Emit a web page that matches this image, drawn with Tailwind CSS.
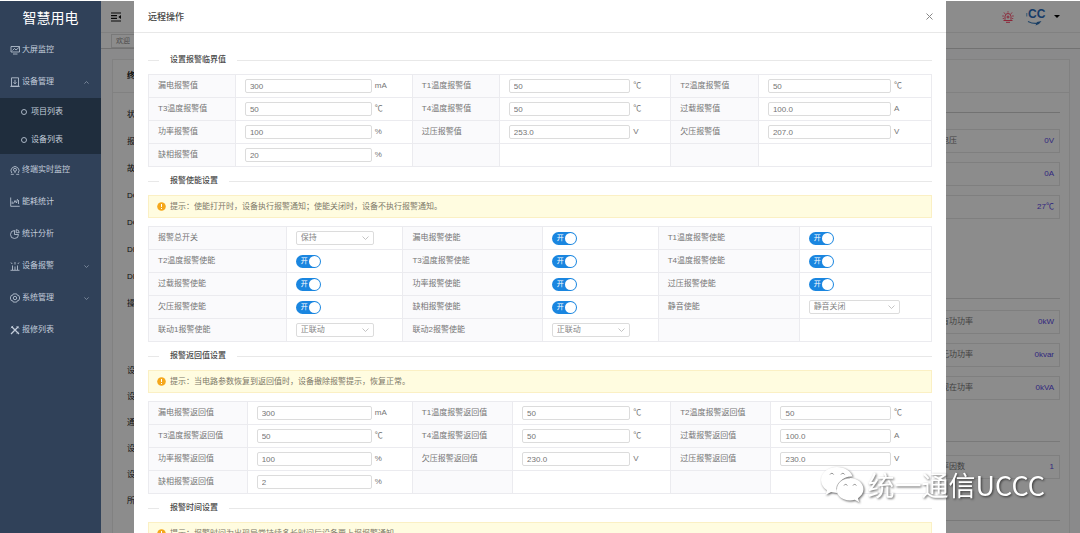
<!DOCTYPE html>
<html lang="zh-CN">
<head>
<meta charset="utf-8">
<title>智慧用电</title>
<script src="https://cdn.jsdelivr.net/npm/@tailwindcss/browser@4"></script>
</head>
<body class="flex h-screen overflow-hidden bg-white pt-px font-['Liberation_Sans','Noto_Sans_CJK_SC',sans-serif] text-[8px] leading-3 text-[#757575]">

<aside class="flex w-[101px] shrink-0 flex-col bg-[#304159] text-[#c3cddb]">
  <h1 class="flex h-[33px] items-center justify-center text-[14px] leading-5 text-white">智慧用电</h1>
  <nav id="menu" class="flex flex-col"></nav>
</aside>

<main class="relative flex min-w-0 flex-1 flex-col bg-white">
  <header class="flex h-8 shrink-0 items-center justify-between border-b border-[#ececec] pr-5 pl-[10px]">
    <button aria-label="收起菜单"><svg class="size-[10px]" viewBox="0 0 10 10" fill="none" stroke="#111" stroke-width="1.2"><path d="M0 1h10M0 3.7h6M0 6.3h6M0 9h10"/><path d="M10 3v4L7.3 5z" fill="#111" stroke="none"/></svg></button>
    <div class="flex items-center">
      <button aria-label="报警"><svg class="size-3" viewBox="0 0 12 12" fill="none" stroke="#ff3358" stroke-width=".9"><path d="M3 8.800V5.500a3 3 0 0 1 6 0v3.300M1.500 9.500h9M6 4.500v3M4.500 6h3M6 .3v1.200M2 1.500l1 1.300M10 1.500L9 2.800M.3 5h1.500M10.200 5h1.500M.8 7.500h1M10.200 7.500h1M4 11.300h4"/></svg></button>
      <button class="ml-3 flex items-center gap-2" aria-label="账户">
        <svg class="h-5 w-5" viewBox="0 0 20 20"><text x="2" y="11" font-family="Liberation Sans, sans-serif" font-size="12" font-weight="700" fill="#2a6cbd">CC</text><path d="M2 14.500c3 1.500 6 2.200 9 1.800" fill="none" stroke="#3f80c0" stroke-width="1.200"/><path d="M9.500 18.500l1.500-3.500 4.500-1-2.500 3z" fill="#2f70b5"/><path d="M.8 6v3.500" stroke="#5fa0d0"/></svg>
        <svg class="h-[3px] w-[6px]" viewBox="0 0 6 3"><path d="M0 0h6L3 3z" fill="#000"/></svg>
      </button>
    </div>
  </header>
  <div class="flex h-4 shrink-0 items-center border-b border-[#cfcfcf] pl-[10px]"><a href="#" class="border border-[#dcdcdc] px-1 text-[7px] text-[#8f8f8f]">欢迎</a></div>
  <div class="flex flex-1 bg-[#fcfcfd] pt-[10px] pr-[10px] pl-[11px]">
    <div class="flex flex-1 flex-col border border-b-0 border-[#ebebeb] bg-white">
      <h2 class="flex h-[33px] items-center border-b border-[#ececec] pl-[14px] font-bold text-[#222]">终端信息</h2>
      <div class="flex flex-1 justify-between">
        <div class="pt-2 pl-[14px] text-[#222]">
          <ul id="info-a"></ul>
          <ul id="info-b" class="pt-[41px]"></ul>
        </div>
        <div class="flex w-[146px] flex-col pr-[9px]">
          <div class="h-5 border-b border-[#d0d0d0]"></div>
          <div id="read-a" class="flex flex-col gap-[9px] pt-4"></div>
          <div class="h-20 border-b border-[#dcdcdc]"></div>
          <div id="read-b" class="flex flex-col gap-[9px] pt-[11px]"></div>
          <div class="h-[42px] border-b border-[#dcdcdc]"></div>
          <div id="read-c" class="flex flex-col pt-[13px]"></div>
          <div class="h-[42px] border-b border-[#dcdcdc]"></div>
        </div>
      </div>
    </div>
  </div>

  <div class="absolute inset-0 overflow-hidden bg-black/45 pr-[134px] pl-[33px]">
    <section role="dialog" aria-labelledby="title" class="bg-white pb-10">
      <div class="flex h-8 items-center justify-between border-b border-[#e8e8e8] px-[14px]">
        <h2 id="title" class="text-[9px] font-medium text-[#444]">远程操作</h2>
        <button aria-label="关闭" class="-mr-px"><svg class="size-[7px]" viewBox="0 0 7 7" stroke="#888" stroke-width="1"><path d="M.5.500l6 6M6.500.500l-6 6"/></svg></button>
      </div>
      <form class="px-[14px] pt-[13px]">
        <div data-divider="设置报警临界值"></div>
        <table class="w-full table-fixed border-collapse">
          <colgroup><col class="w-[11.1%]"><col class="w-[22.6%]"><col class="w-[11.1%]"><col class="w-[21.9%]"><col class="w-[11.2%]"><col class="w-[22.1%]"></colgroup>
          <tbody id="limits"></tbody>
        </table>
        <div data-divider="报警使能设置"></div>
        <div data-alert="提示：使能打开时，设备执行报警通知；使能关闭时，设备不执行报警通知。"></div>
        <table class="w-full table-fixed border-collapse">
          <colgroup><col class="w-[17.6%]"><col class="w-[14.9%]"><col class="w-[17.8%]"><col class="w-[14.8%]"><col class="w-[18%]"><col class="w-[16.9%]"></colgroup>
          <tbody id="enables"></tbody>
        </table>
        <div data-divider="报警返回值设置"></div>
        <div data-alert="提示：当电路参数恢复到返回值时，设备撤除报警提示，恢复正常。"></div>
        <table class="w-full table-fixed border-collapse">
          <colgroup><col class="w-[12.6%]"><col class="w-[21.1%]"><col class="w-[12.8%]"><col class="w-[20.2%]"><col class="w-[12.8%]"><col class="w-[20.5%]"></colgroup>
          <tbody id="returns"></tbody>
        </table>
        <div data-divider="报警时间设置"></div>
        <div data-alert="提示：报警时间为出现异常持续多长时间后设备要上报报警通知。"></div>
      </form>
    </section>
  </div>
</main>

<div class="pointer-events-none absolute right-[35px] bottom-[30px] flex items-center gap-1 text-white drop-shadow-[1px_1px_1px_rgba(0,0,0,0.6)]">
  <svg class="h-9 w-[43px]" viewBox="0 0 43 36"><path fill="#fff" d="M16 0C7 0 0 5.800 0 13c0 4.200 2.300 7.800 6 10.200L4.500 28l5.600-2.900c1.800.5 3.800.8 5.900.8C14.500 16 22 9 31.500 9.500 30 4 23.500 0 16 0z"/><path fill="#fff" d="M29 11c-7.700 0-13.500 5-13.500 11.300S21.300 33.500 29 33.500c1.600 0 3.200-.2 4.700-.7l4.500 2.500-1.200-4.100c3.300-2.200 5.500-5.300 5.500-8.900C42.500 16 36.500 11 29 11z"/><g fill="none" stroke="#8a8a8a" stroke-width="1"><path d="M9 7.500a2 2 0 0 1 3.600 0M20 7.500a2 2 0 0 1 3.600 0M23 18.500a1.800 1.800 0 0 1 3.300 0M32 18.500a1.800 1.800 0 0 1 3.300 0"/><path d="M15.500 22.500C15.500 16 21.500 11 29 11" stroke="#aaa" stroke-width=".8"/></g></svg>
  <span class="font-['Noto_Sans_CJK_SC',sans-serif] text-[27px] leading-9">统一通信UCCC</span>
</div>

<script>
const $ = id => document.getElementById(id);
const icons = {
  screen: '<path d="M1 1.500h8.500v5.500H1zM3 9h4.500M2.500 5.500l2-2 1.500 1.500 3.500-3"/>',
  device: '<path d="M1.500.8h7v8.400h-7zM5 2.800v4M3.500 5.300L5 6.800l1.500-1.500M.3 9.400h9.400"/>',
  monitor: '<path d="M1.800 8a4 4 0 1 1 6.400 0M.8 9.300h3M6.200 9.300h3"/><circle cx="5" cy="4.800" r="1.500"/><path d="M5 6.300v1.800"/>',
  chart: '<path d="M.7.500v8.800h9M2.200 7V4.500M3.500 6.500l1.500-3 1.500 2.500 1-4M8.500 3v4"/>',
  pie: '<path d="M4.500 1.500a4 4 0 1 0 4 4h-4zM6.200.7v3h3a3 3 0 0 0-3-3z"/>',
  alarm: '<path d="M2.500 9V4.500M5 9V5.500M7.500 9V4.500M.5 9.300h9M1 1.500l1.200 1.500M9 1.500L7.800 3M5 1v2.500"/>',
  gear: '<path d="M3.300.9h3.400l.6 1.300 1.500.3.900 2.500-.9 2.500-1.500.3-.6 1.300H3.300l-.6-1.300-1.500-.3L.3 5l.9-2.500 1.500-.3z"/><circle cx="5" cy="5" r="1.700"/>',
  repair: '<path d="M1.500 1.500l7.500 7.500M8.500 1.500L1 9" stroke-width="1.300"/><path d="M.8 3.200L3.200.8M6.500 1l2.500 2.500M6.800 8.500l1.700-1.700"/>'
};
const icon = k => `<svg class="size-[10px] shrink-0" viewBox="0 0 10 10" fill="none" stroke="currentColor" stroke-width=".8">${icons[k]}</svg>`;
const arrow = up => `<svg class="ml-auto h-[3px] w-[5px] opacity-60" viewBox="0 0 5 3" fill="none" stroke="currentColor" stroke-width=".8"><path d="${up ? 'M.4 2.600L2.500.500l2.100 2.100' : 'M.4.400l2.100 2.100L4.600.400'}"/></svg>`;
const item = ([k, name, a]) => `<a href="#" class="flex h-8 items-center gap-[2px] pr-3 pl-[10px]">${icon(k)}<span>${name}</span>${a ? arrow(a === 'up') : ''}</a>`;
const sub = name => `<a href="#" class="flex h-7 items-center gap-1 pl-[21px]"><span class="size-[6px] rounded-full border border-[#a9b5c4]"></span>${name}</a>`;
$('menu').innerHTML = [['screen', '大屏监控'], ['device', '设备管理', 'up']].map(item).join('')
  + `<div class="bg-[#1f2d3d]">${sub('项目列表')}${sub('设备列表')}</div>`
  + [['monitor', '终端实时监控'], ['chart', '能耗统计'], ['pie', '统计分析'], ['alarm', '设备报警', 'down'], ['gear', '系统管理', 'down'], ['repair', '报修列表']].map(item).join('');

$('info-a').innerHTML = ['状态', '报警', '故障', 'DO1', 'DO2', 'DI1', 'DI2', '操作'].map(t => `<li class="flex h-[27px] items-center">${t}</li>`).join('');
$('info-b').innerHTML = ['设备名称', '设备编号', '通信', '设备型号', '设备地址', '所属项目'].map(t => `<li class="flex h-[26px] items-center">${t}</li>`).join('');
const reading = ([n, v]) => `<div class="flex h-6 items-center justify-between border border-[#e8e8e8] pr-[5px] pl-[17px]"><span class="text-[#777]">${n}</span><span class="text-[#5a48e8]">${v}</span></div>`;
$('read-a').innerHTML = [['电压', '0V'], ['', '0A'], ['', '27℃']].map(reading).join('');
$('read-b').innerHTML = [['有功功率', '0kW'], ['无功功率', '0kvar'], ['视在功率', '0kVA']].map(reading).join('');
$('read-c').innerHTML = [['率因数', '1']].map(reading).join('');

document.querySelectorAll('[data-divider]').forEach(d => {
  d.className = 'flex h-7 items-center';
  d.innerHTML = `<span class="w-[11px] border-t border-[#e8e8e8]"></span><h3 class="px-[11px] font-medium text-[#484848]">${d.dataset.divider}</h3><span class="flex-1 border-t border-[#e8e8e8]"></span>`;
});
document.querySelectorAll('[data-alert]').forEach(d => {
  d.className = 'mb-2 flex h-[23px] items-center gap-1 border border-[#fbf0c4] bg-[#fffce0] pl-2 text-[#7d7868]';
  d.innerHTML = `<svg class="size-[9px]" viewBox="0 0 9 9"><circle cx="4.500" cy="4.500" r="4.300" fill="#f5a81c"/><path d="M4.500 2v3M4.500 6v1" stroke="#fff" stroke-width="1"/></svg><p>${d.dataset.alert}</p>`;
});

let n = 0;
const chevron = '<svg class="pointer-events-none absolute top-[5px] right-[5px] h-1 w-[7px]" viewBox="0 0 7 4" fill="none" stroke="#b5b5b5" stroke-width=".8"><path d="M.5.500l3 3 3-3"/></svg>';
function field(c, id) {
  if (c.unit) return `<div class="flex items-center gap-[3px]"><input id="${id}" value="${c.value}" class="h-[14px] min-w-0 flex-1 rounded-xs border border-[#dcdcdc] bg-white px-1 text-[8px] text-[#757575]"><span class="w-[29px]">${c.unit}</span></div>`;
  if (c.on) return `<span class="relative flex h-[13px] w-[25px] items-center"><input id="${id}" type="checkbox" role="switch" checked class="absolute inset-0 appearance-none rounded-full bg-[#bfbfbf] checked:bg-[#1a86e0]"><span class="pointer-events-none relative pl-[5px] text-[7px] text-white">开</span><span class="pointer-events-none absolute right-px size-[11px] rounded-full bg-white"></span></span>`;
  return `<span class="relative block ${c.wide ? 'w-[91px]' : 'w-[78px]'}"><select id="${id}" class="block h-[14px] w-full appearance-none rounded-xs border border-[#dcdcdc] bg-white pl-1 text-[8px] leading-3 text-[#858585]"><option>${c.pick}</option></select>${chevron}</span>`;
}
function rows(target, list) {
  let html = '';
  for (let i = 0; i < list.length; i += 3) {
    html += '<tr class="h-[23px]">' + list.slice(i, i + 3).map(c => {
      const id = 'f' + n++;
      return `<th class="border border-[#ebebef] bg-[#fafafc] p-0 pl-[9px] text-left font-normal">${c ? `<label for="${id}">${c.name}</label>` : ''}</th><td class="border border-[#ebebef] p-0 pr-2 pl-[9px]">${c ? field(c, id) : ''}</td>`;
    }).join('') + '</tr>';
  }
  $(target).innerHTML = html;
}
const v = (name, value, unit) => ({ name, value, unit });
const on = name => ({ name, on: true });
const pick = (name, pick, wide) => ({ name, pick, wide });
rows('limits', [
  v('漏电报警值', '300', 'mA'), v('T1温度报警值', '50', '℃'), v('T2温度报警值', '50', '℃'),
  v('T3温度报警值', '50', '℃'), v('T4温度报警值', '50', '℃'), v('过载报警值', '100.0', 'A'),
  v('功率报警值', '100', '%'), v('过压报警值', '253.0', 'V'), v('欠压报警值', '207.0', 'V'),
  v('缺相报警值', '20', '%'), null, null]);
rows('enables', [
  pick('报警总开关', '保持'), on('漏电报警使能'), on('T1温度报警使能'),
  on('T2温度报警使能'), on('T3温度报警使能'), on('T4温度报警使能'),
  on('过载报警使能'), on('功率报警使能'), on('过压报警使能'),
  on('欠压报警使能'), on('缺相报警使能'), pick('静音使能', '静音关闭', true),
  pick('联动1报警使能', '正联动'), pick('联动2报警使能', '正联动'), null]);
rows('returns', [
  v('漏电报警返回值', '300', 'mA'), v('T1温度报警返回值', '50', '℃'), v('T2温度报警返回值', '50', '℃'),
  v('T3温度报警返回值', '50', '℃'), v('T4温度报警返回值', '50', '℃'), v('过载报警返回值', '100.0', 'A'),
  v('功率报警返回值', '100', '%'), v('欠压报警返回值', '230.0', 'V'), v('过压报警返回值', '230.0', 'V'),
  v('缺相报警返回值', '2', '%'), null, null]);
</script>
</body>
</html>
